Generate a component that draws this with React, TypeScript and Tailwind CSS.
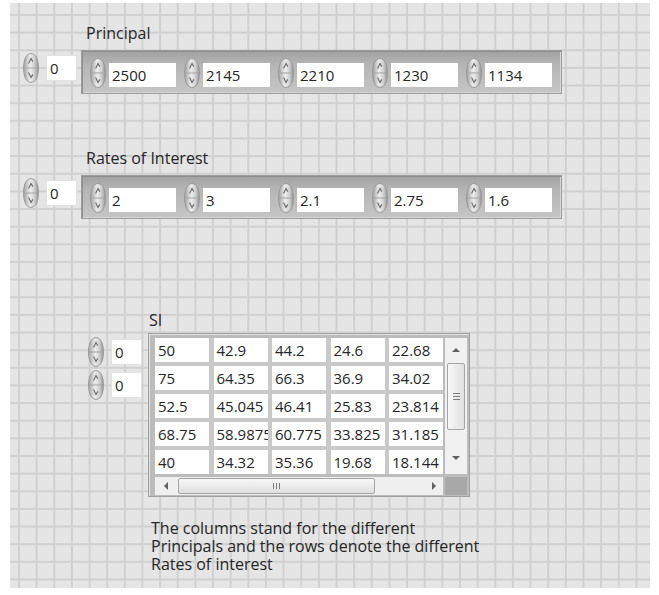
const sans = "font-['Open_Sans','Noto_Sans',sans-serif] font-medium text-[#262626]"

const principals = ['2500', '2145', '2210', '1230', '1134']
const rates = ['2', '3', '2.1', '2.75', '1.6']
const si = [
  ['50', '42.9', '44.2', '24.6', '22.68'],
  ['75', '64.35', '66.3', '36.9', '34.02'],
  ['52.5', '45.045', '46.41', '25.83', '23.814'],
  ['68.75', '58.9875', '60.775', '33.825', '31.185'],
  ['40', '34.32', '35.36', '19.68', '18.144'],
]

function Spinner() {
  return (
    <svg width="16" height="30" viewBox="0 0 16 30" className="shrink-0">
      <defs>
        <linearGradient id="spin" x1="0" x2="1" y1="0" y2="0">
          <stop offset="0" stopColor="#a2a2a2" />
          <stop offset="0.45" stopColor="#eeeeee" />
          <stop offset="0.75" stopColor="#cdcdcd" />
          <stop offset="1" stopColor="#939393" />
        </linearGradient>
      </defs>
      <path
        d="M8 0.6 C13 0.6 15.4 7 15.4 15 C15.4 23 13 29.4 8 29.4 C3 29.4 0.6 23 0.6 15 C0.6 7 3 0.6 8 0.6 Z"
        fill="url(#spin)"
        stroke="#989898"
        strokeWidth="1"
      />
      <line x1="1.5" y1="15" x2="14.5" y2="15" stroke="#a3a3a3" strokeWidth="1" />
      <path d="M5.6 10.5 L8 5.5 L9.8 8.6" fill="none" stroke="#6a6a6a" strokeWidth="1.1" />
      <path d="M5.6 19.5 L8 24.5 L9.8 21.4" fill="none" stroke="#6a6a6a" strokeWidth="1.1" />
    </svg>
  )
}

function IndexControl() {
  return (
    <div className="flex items-start">
      <Spinner />
      <div className="ml-[7px] mt-[2px] w-[31px] h-[26px] bg-white border border-[#e2e2e2] pl-[3px] text-[15px] leading-[24px]">
        0
      </div>
    </div>
  )
}

function ArrayRow({ label, values }: { label: string; values: string[] }) {
  return (
    <div>
      <div className="ml-[76px] text-[16px] leading-[20px]">{label}</div>
      <div className="mt-[7px] flex items-start">
        <div className="ml-[13px] mt-[3px]">
          <IndexControl />
        </div>
        <div className="ml-[4px] w-[481px] h-[44px] flex items-start gap-[8px] pl-[8px] pt-[7px] border border-[#9d9d9d] bg-[linear-gradient(to_bottom,#a2a2a2,#b6b6b6_35%,#c5c5c5)] shadow-[inset_1px_1px_0_#8c8c8c,inset_-1px_-1px_0_#d6d6d6]">
          {values.map((v) => (
            <div key={v} className="flex items-start">
              <Spinner />
              <div className="ml-[3px] mt-[5px] w-[67px] h-[24px] bg-white pl-[3px] text-[15px] leading-[24px]">
                {v}
              </div>
            </div>
          ))}
        </div>
      </div>
    </div>
  )
}

function Tri({ dir }: { dir: 'up' | 'down' | 'left' | 'right' }) {
  const d = {
    up: 'M0 5 L4 1 L8 5 Z',
    down: 'M0 1 L4 5 L8 1 Z',
    left: 'M5 0 L1 4 L5 8 Z',
    right: 'M1 0 L5 4 L1 8 Z',
  }[dir]
  const vertical = dir === 'up' || dir === 'down'
  return (
    <svg width={vertical ? 8 : 6} height={vertical ? 6 : 8} viewBox={vertical ? '0 0 8 6' : '0 0 6 8'}>
      <path d={d} fill="#606060" />
    </svg>
  )
}

function SITable() {
  return (
    <div className="w-[322px] h-[164px] pl-[6px] pt-[4px] border border-[#a0a0a0] bg-[#bcbcbc] shadow-[inset_1px_1px_0_#e2e2e2]">
      <div className="flex gap-[2px]">
        <div className="grid grid-cols-[repeat(5,54px)] gap-x-[4.5px] gap-y-[4px] bg-[#c9c9c9]">
          {si.flat().map((v, i) => (
            <div
              key={i}
              className="h-[24px] bg-white pl-[3px] text-[15px] leading-[24px] overflow-hidden whitespace-nowrap"
            >
              {v}
            </div>
          ))}
        </div>
        <div className="w-[22px] h-[136px] bg-[#f1f1f1] flex flex-col items-center pt-[9px]">
          <Tri dir="up" />
          <div className="mt-[10px] w-[18px] h-[67px] rounded-[2px] border border-[#a5a5a5] bg-[linear-gradient(to_right,#f7f7f7,#e1e1e1)] flex flex-col items-center justify-center gap-[2px]">
            <div className="w-[7px] h-px bg-[#7a7a7a]" />
            <div className="w-[7px] h-px bg-[#7a7a7a]" />
            <div className="w-[7px] h-px bg-[#7a7a7a]" />
          </div>
          <div className="mt-[25px]">
            <Tri dir="down" />
          </div>
        </div>
      </div>
      <div className="mt-[3px] flex gap-[2px]">
        <div className="w-[288px] h-[18px] bg-[#efefef] flex items-center pl-[8px] pr-[6px]">
          <Tri dir="left" />
          <div className="ml-[9px] w-[197px] h-[16px] rounded-[2px] border border-[#a5a5a5] bg-[linear-gradient(to_bottom,#f7f7f7,#dfdfdf)] flex items-center justify-center gap-[2px]">
            <div className="w-px h-[6px] bg-[#7a7a7a]" />
            <div className="w-px h-[6px] bg-[#7a7a7a]" />
            <div className="w-px h-[6px] bg-[#7a7a7a]" />
          </div>
          <div className="ml-auto">
            <Tri dir="right" />
          </div>
        </div>
        <div className="w-[22px] h-[18px] bg-[#a8a8a8]" />
      </div>
    </div>
  )
}

export default function App() {
  return (
    <div className={`w-[659px] h-[595px] bg-white pt-[3px] pl-[10px] ${sans}`}>
      <div className="w-[640px] h-[585px] pt-[20px] bg-[#e5e5e5] bg-[linear-gradient(to_right,#d0d0d0_2px,transparent_2px),linear-gradient(to_bottom,#d0d0d0_2px,transparent_2px)] bg-[size:17.65px_17.65px] bg-[position:8px_11px]">
        <ArrayRow label="Principal" values={principals} />
        <div className="mt-[54px]">
          <ArrayRow label="Rates of Interest" values={rates} />
        </div>

        <div className="mt-[91px]">
          <div className="ml-[139px] text-[16px] leading-[20px]">SI</div>
          <div className="mt-[3px] flex items-start">
            <div className="ml-[78px] mt-[4px] flex flex-col gap-[3px]">
              <IndexControl />
              <IndexControl />
            </div>
            <div className="ml-[6px]">
              <SITable />
            </div>
          </div>
        </div>

        <p className="mt-[22px] ml-[141px] text-[16px] leading-[18px]">
          The columns stand for the different
          <br />
          Principals and the rows denote the different
          <br />
          Rates of interest
        </p>
      </div>
    </div>
  )
}
